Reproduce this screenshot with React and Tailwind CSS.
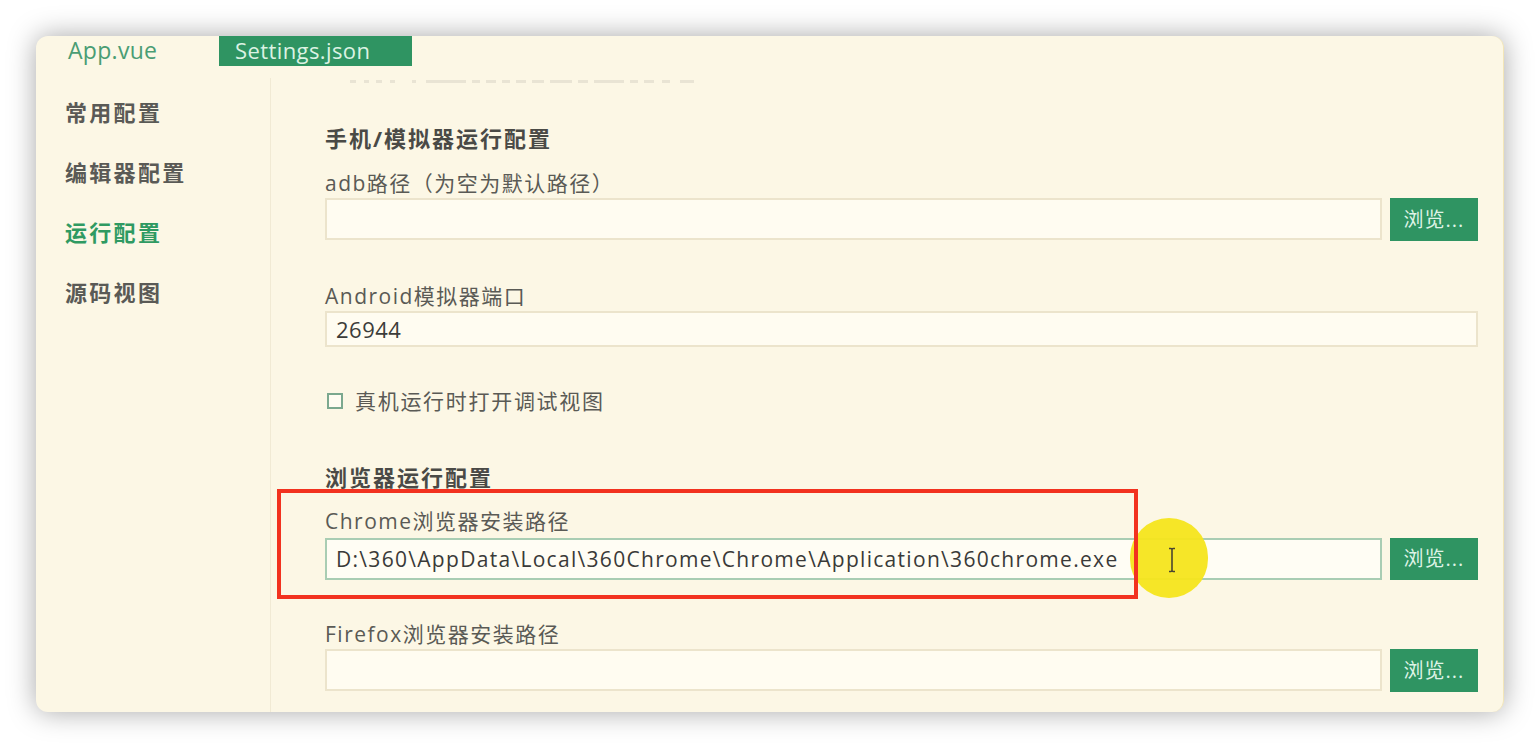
import React from "react";

const FONT = { fontFamily: "'Open Sans', 'Noto Sans CJK SC', sans-serif" };

function BrowseButton({ h }) {
  return (
    <button
      className={`w-[88px] ${h} shrink-0 bg-[#2f9462] text-[#dff3e6] text-[20px] flex items-center justify-center tracking-[1px]`}
    >
      浏览...
    </button>
  );
}

function Label({ children, mt }) {
  return (
    <div className={`${mt} h-[28px] leading-[28px] text-[21px] text-[#5a5a55] tracking-[1.5px] whitespace-nowrap`}>
      {children}
    </div>
  );
}

function Heading({ children, mt }) {
  return (
    <div className={`${mt} h-[30px] leading-[30px] text-[22px] font-bold text-[#4a4a46] tracking-[2px] whitespace-nowrap`}>
      {children}
    </div>
  );
}

export default function App() {
  const sideItems = [
    { t: "常用配置", active: false },
    { t: "编辑器配置", active: false },
    { t: "运行配置", active: true },
    { t: "源码视图", active: false },
  ];
  const faint = [
    [0, 6], [14, 5], [26, 6], [40, 5], [62, 4], [76, 40], [122, 8], [136, 10], [152, 8], [166, 10], [182, 12], [200, 22], [228, 10], [244, 30], [280, 8], [294, 10], [312, 8], [330, 14],
  ];
  return (
    <div className="w-[1540px] h-[748px] bg-white overflow-hidden pt-[36px] pl-[36px]" style={FONT}>
      <div className="relative w-[1468px] h-[676px] rounded-[12px] overflow-hidden bg-[#fcf7e5] shadow-[0_0_28px_rgba(0,0,0,0.35)] border-r border-[#f3e6b8]">
        {/* Tab bar */}
        <div className="h-[30px] flex items-stretch">
          <div className="w-[183px] pl-[32px] text-[23px] leading-[28px] text-[#4a9d74] tracking-[0.3px] whitespace-nowrap">App.vue</div>
          <div className="w-[193px] bg-[#2f9462] text-[#dcf2e3] text-[22px] leading-[28px] pl-[16px] tracking-[0.4px] whitespace-nowrap">Settings.json</div>
        </div>
        <div className="flex h-[646px]">
          {/* Sidebar */}
          <div className="w-[235px] shrink-0 border-r border-[#f1ead4] mt-[12px] pl-[29px] pt-[19px] flex flex-col gap-[30px]">
            {sideItems.map((it) => (
              <div
                key={it.t}
                className={`h-[30px] leading-[30px] text-[22px] font-bold tracking-[2.3px] whitespace-nowrap ${it.active ? "text-[#2f9a62]" : "text-[#5a5a56]"}`}
              >
                {it.t}
              </div>
            ))}
          </div>
          {/* Content */}
          <div className="flex-1 pl-[54px] pr-[25px] flex flex-col">
            <div className="mt-[14px] h-[4px] ml-[25px] relative opacity-40">
              {faint.map(([x, w], i) => (
                <div
                  key={i}
                  className="absolute top-0 h-[3px] bg-[#cfcabb]"
                  style={{ left: x, width: w }}
                />
              ))}
            </div>
            <Heading mt="mt-[39px]">手机/模拟器运行配置</Heading>
            <Label mt="mt-[16px]">adb路径（为空为默认路径）</Label>
            <div className="mt-[1px] flex gap-[8px]">
              <div className="flex-1 h-[42px] bg-[#fffcf1] border-2 border-[#ece4cc]" />
              <BrowseButton h="h-[43px]" />
            </div>
            <Label mt="mt-[41px]">Android模拟器端口</Label>
            <div className="mt-[1px] h-[36px] bg-[#fffcf1] border-2 border-[#ece4cc] pl-[9px] text-[22px] leading-[32px] text-[#3c3c3a] tracking-[0.5px]">
              26944
            </div>
            <div className="mt-[40px] h-[28px] flex items-center">
              <div className="ml-[2px] w-[16px] h-[16px] border-2 border-[#7ba88e] bg-[#fffcf1]" />
              <span className="ml-[12px] text-[21px] leading-[28px] text-[#5a5a55] tracking-[1.7px]">真机运行时打开调试视图</span>
            </div>
            <Heading mt="mt-[47px]">浏览器运行配置</Heading>
            <Label mt="mt-[15px]">Chrome浏览器安装路径</Label>
            <div className="mt-[3px] flex gap-[8px]">
              <div className="flex-1 h-[42px] bg-[#fffdf4] border-2 border-[#a9cdb3] pl-[9px] text-[21px] leading-[38px] text-[#3a3a38] tracking-[1.3px] whitespace-nowrap overflow-hidden">
                {"D:\\360\\AppData\\Local\\360Chrome\\Chrome\\Application\\360chrome.exe"}
              </div>
              <BrowseButton h="h-[42px]" />
            </div>
            <Label mt="mt-[40px]">Firefox浏览器安装路径</Label>
            <div className="mt-[1px] flex gap-[8px]">
              <div className="flex-1 h-[42px] bg-[#fffcf1] border-2 border-[#ece4cc]" />
              <BrowseButton h="h-[43px]" />
            </div>
          </div>
        </div>

        {/* Yellow cursor highlight */}
        <div className="absolute left-[1094px] top-[482px] w-[78px] h-[80px] rounded-full bg-[#f6e51c] opacity-95" />
        <svg className="absolute left-[1132px] top-[511px]" width="8" height="26" viewBox="0 0 8 26">
          <path d="M1 1.5 H3 Q4 1.5 4 3 V23 Q4 24.5 3 24.5 H1 M7 1.5 H5 Q4 1.5 4 3 M4 23 Q4 24.5 5 24.5 H7" fill="none" stroke="#4b4630" strokeWidth="1.6" />
        </svg>
        {/* Red annotation box */}
        <div className="absolute left-[241px] top-[453px] w-[861px] h-[110px] border-[4px] border-[#f2321f]" />
      </div>
    </div>
  );
}
